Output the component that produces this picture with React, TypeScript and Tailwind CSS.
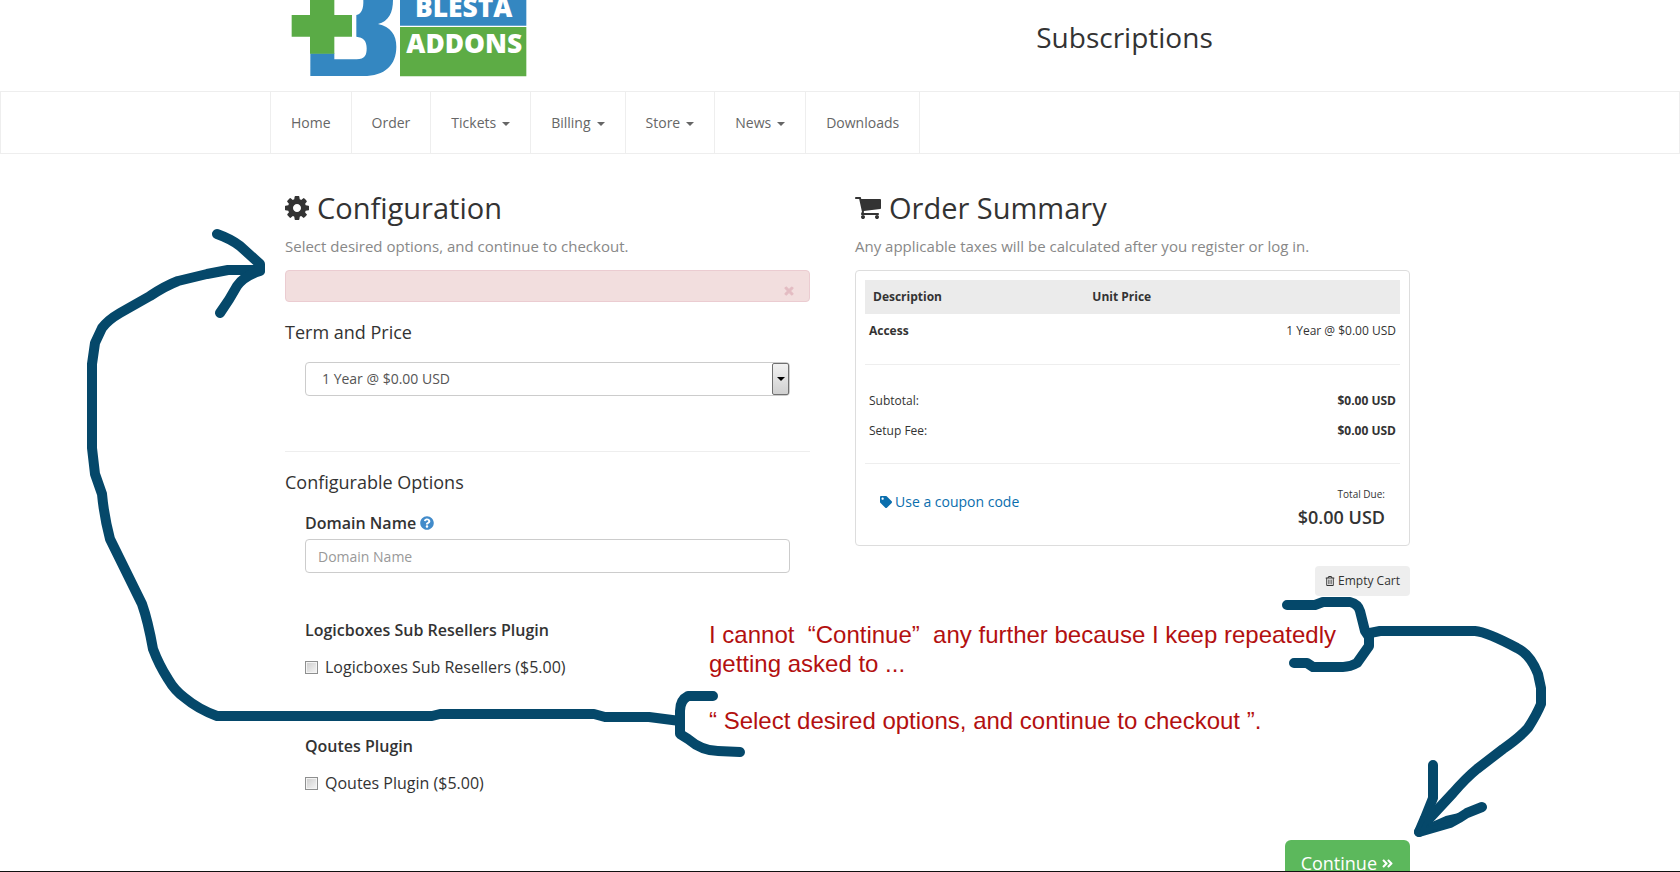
import React from 'react';
import { FaTag, FaRegTrashAlt, FaQuestionCircle, FaAngleDoubleRight, FaTimes } from 'react-icons/fa';

const navItems = [
    { label: 'Home' },
    { label: 'Order' },
    { label: 'Tickets', menu: true },
    { label: 'Billing', menu: true },
    { label: 'Store', menu: true },
    { label: 'News', menu: true },
    { label: 'Downloads' },
];

const addons = [
    { id: 'logicboxes', title: 'Logicboxes Sub Resellers Plugin', option: 'Logicboxes Sub Resellers ($5.00)' },
    { id: 'qoutes', title: 'Qoutes Plugin', option: 'Qoutes Plugin ($5.00)' },
];

function Logo() {
    return (
        <svg className="block ml-5 w-[240px] h-[78px]" viewBox="90 0 720 234" role="img" aria-label="Blesta Addons">
            <path
                fill="#3487c1"
                d="M310 0H399C399 38 386 64 354 72C392 80 409 105 409 140C409 195 375 228 310 228H151V160H223V178H290C315 178 320 165 320 145C320 122 310 112 289 110V45C305 42 311 25 310 0Z"
            />
            <path fill="#5aab46" d="M150 0H223V45H276V110H223V161H150V110H95V45H150Z" />
            <path fill="#3487c1" d="M420 0H799V77H420Z" />
            <path fill="#5dac45" d="M420 81H799V229H420Z" />
            <g fill="#fff" fontFamily="Open Sans, sans-serif" fontWeight="800">
                <text x="465" y="51" fontSize="79">BLESTA</text>
                <text x="439" y="159" fontSize="79">ADDONS</text>
            </g>
        </svg>
    );
}

function CogIcon() {
    return (
        <svg className="size-6" viewBox="128 128 1536 1536" fill="currentColor" aria-hidden="true">
            <path d="M1152 896q0-106-75-181t-181-75-181 75-75 181 75 181 181 75 181-75 75-181zm512-109v222q0 12-8 23t-20 13l-185 28q-19 54-39 91 35 50 107 138 10 12 10 25t-9 23q-27 37-99 108t-94 71q-12 0-26-9l-138-108q-44 23-91 38-16 136-29 186-7 28-36 28h-222q-14 0-24.500-8.500t-11.500-21.500l-28-184q-49-16-90-37l-141 107q-10 9-25 9-14 0-25-11-126-114-165-168-7-10-7-23 0-12 8-23 15-21 51-66.500t54-70.500q-27-50-41-99l-183-27q-13-2-21-12.500t-8-23.500v-222q0-12 8-23t19-13l186-28q14-46 39-92-40-57-107-138-10-12-10-24 0-10 9-23 26-36 98.500-107.500t94.500-71.500q13 0 26 10l138 107q44-23 91-38 16-136 29-186 7-28 36-28h222q14 0 24.500 8.500t11.500 21.500l28 184q49 16 90 37l142-107q9-9 24-9 13 0 25 10 129 119 165 170 7 8 7 22 0 12-8 23-15 21-51 66.500t-54 70.500q26 50 41 98l183 28q13 2 21 12.500t8 23.500z" />
        </svg>
    );
}

function CartIcon() {
    return (
        <svg className="size-[26px]" viewBox="64 128 1664 1664" fill="currentColor" aria-hidden="true">
            <path d="M704 1536q0 52-38 90t-90 38-90-38-38-90 38-90 90-38 90 38 38 90zm896 0q0 52-38 90t-90 38-90-38-38-90 38-90 90-38 90 38 38 90zm128-1088v512q0 24-16.500 42.500t-40.500 21.500l-1044 122q13 60 13 70 0 16-24 64h920q26 0 45 19t19 45-19 45-45 19h-1024q-26 0-45-19t-19-45q0-11 8-31.500t16-36 21.500-40 15.500-29.500l-177-823h-204q-26 0-45-19t-19-45 19-45 45-19h256q16 0 28.500 6.500t19.500 15.500 13 24.500 8 26 5.500 29.500 4.500 26h1201q26 0 45 19t19 45z" />
        </svg>
    );
}

function Annotations() {
    return (
        <div className="absolute inset-y-0 left-1/2 w-[1680px] -translate-x-1/2 pointer-events-none">
            <svg
                className="absolute inset-0 w-[1680px] h-[872px]"
                viewBox="0 -1 1680 872"
                fill="none"
                stroke="#05486a"
                strokeWidth="10"
                strokeLinecap="round"
                strokeLinejoin="round"
            >
                <path d="M260 269H228L207 273L178 280Q165 285 150 295L120 312Q108 319 102 327L95 342L92 363V447L95 473L102 493Q104 515 110 538L142 603Q148 620 153 648Q159 664 168 678Q175 690 185 697Q198 708 217 715H432L440 713H594L605 716H649L680 720" />
                <path d="M217 233Q231 238 240 245L260 263V270Q244 275 237 285Q230 298 220 312" />
                <path d="M713 695H688Q680 699 680 710V733L688 738Q702 750 718 750L740 751" />
                <path d="M1287 604H1315L1323 601H1350Q1358 603 1360 610L1365 630L1369 636V645L1357 662Q1350 666 1343 666H1313L1307 662H1294" />
                <path d="M1370 632L1380 630H1475Q1487 631 1517 647Q1530 653 1538 673L1541 687V703Q1537 713 1528 727Q1520 736 1503 748L1477 768Q1466 777 1453 792L1427 820L1419 831" />
                <path d="M1433 764V797L1425 817L1419 831L1450 822Q1460 817 1467 812L1482 806" />
                <path fill="#05486a" strokeWidth="4" d="M1434 806L1422 830L1452 822L1468 812L1446 817L1430 824Z" />
            </svg>
            <div className="absolute top-[620px] left-[709px] font-['Liberation_Sans',sans-serif] text-[24px] leading-[29px] text-[#b31010] whitespace-pre">
                <p>I cannot  “Continue”  any further because I keep repeatedly</p>
                <p>getting asked to ...</p>
                <p className="mt-7">“ Select desired options, and continue to checkout ”.</p>
            </div>
        </div>
    );
}

function OrderSummary() {
    return (
        <section className="w-1/2 px-[15px]">
            <h2 className="flex items-center gap-2 text-[29px] leading-8">
                <CartIcon />
                Order Summary
            </h2>
            <p className="mt-3 text-[15px] leading-5 text-[#888]">Any applicable taxes will be calculated after you register or log in.</p>

            <div className="mt-[14px] border border-[#ddd] rounded-sm p-[9px] text-xs">
                <table className="w-full">
                    <thead>
                        <tr className="h-[34px] bg-[#ebebeb] text-left">
                            <th className="pl-2 w-[41%]">Description</th>
                            <th className="pl-2">Unit Price</th>
                        </tr>
                    </thead>
                    <tbody>
                        <tr className="h-[34px]">
                            <td className="pl-1 font-bold">Access</td>
                            <td className="pr-1 text-right">1 Year @ $0.00 USD</td>
                        </tr>
                    </tbody>
                </table>
                <hr className="mt-4 border-[#eee]" />
                <table className="mt-[21px] w-full">
                    <tbody>
                        <tr className="h-[30px]">
                            <td className="pl-1">Subtotal:</td>
                            <td className="pr-1 text-right font-bold">$0.00 USD</td>
                        </tr>
                        <tr className="h-[30px]">
                            <td className="pl-1">Setup Fee:</td>
                            <td className="pr-1 text-right font-bold">$0.00 USD</td>
                        </tr>
                    </tbody>
                </table>
                <hr className="mt-[17px] border-[#eee]" />
                <div className="flex justify-between px-[15px] pt-[22px] pb-1">
                    <a href="#coupon" className="flex items-center gap-[3px] h-8 text-sm text-[#0a6ead]">
                        <FaTag className="size-3" />
                        Use a coupon code
                    </a>
                    <div className="text-right">
                        <p className="text-[10px] leading-4">Total Due:</p>
                        <p className="text-lg leading-[30px] font-semibold">$0.00 USD</p>
                    </div>
                </div>
            </div>

            <div className="mt-5 flex justify-end">
                <button type="button" className="flex items-center gap-[3px] h-[30px] px-[10px] rounded-sm bg-[#eee] text-xs">
                    <FaRegTrashAlt className="size-[10px]" />
                    Empty Cart
                </button>
            </div>
        </section>
    );
}

function Configuration() {
    return (
        <section className="w-1/2 px-[30px]">
            <h2 className="flex items-center gap-2 text-[29px] leading-8">
                <CogIcon />
                Configuration
            </h2>
            <p className="mt-3 text-[15px] leading-5 text-[#888]">Select desired options, and continue to checkout.</p>

            <div className="mt-[14px] flex items-end justify-end h-8 px-[14px] pb-1 rounded-sm border border-[#ebccd1] bg-[#f2dede]">
                <button type="button" aria-label="Close" className="text-[#e3bcc2]">
                    <FaTimes className="size-3 stroke-current stroke-[40]" />
                </button>
            </div>

            <h3 className="mt-[18px] text-lg leading-6">Term and Price</h3>
            <div className="px-5">
                <div className="relative mt-[18px]">
                    <select
                        aria-label="Term and Price"
                        className="appearance-none block w-full h-[34px] pl-4 rounded-sm border border-[#ccc] bg-white text-sm text-[#555]"
                    >
                        <option>1 Year @ $0.00 USD</option>
                    </select>
                    <span className="absolute inset-y-px right-px flex items-center justify-center w-[17px] border border-[#707070] rounded-xs bg-linear-to-b from-[#f2f2f2] to-[#d0d0d0] pointer-events-none">
                        <span className="border-x-4 border-t-4 border-x-transparent border-t-black" />
                    </span>
                </div>
            </div>

            <hr className="mt-[55px] border-[#eee]" />

            <h3 className="mt-[18px] text-lg leading-6">Configurable Options</h3>
            <div className="px-5">
                <label htmlFor="domain" className="mt-[17px] flex items-center gap-1 text-base leading-6 font-semibold">
                    Domain Name
                    <FaQuestionCircle className="size-[14px] text-[#428bca]" />
                </label>
                <input
                    id="domain"
                    type="text"
                    placeholder="Domain Name"
                    className="mt-1 block w-full h-[34px] px-3 rounded-sm border border-[#ccc] text-sm placeholder:text-[#999]"
                />
                <div className="mt-[45px] flex flex-col gap-[55px]">
                    {addons.map((addon) => (
                        <fieldset key={addon.id}>
                            <legend className="text-base leading-6 font-semibold">{addon.title}</legend>
                            <label className="mt-[13px] flex items-center gap-[7px] text-base leading-6">
                                <input
                                    type="checkbox"
                                    className="appearance-none size-[13px] border border-[#8e8f8f] bg-linear-to-br from-[#ccc] to-[#f6f6f6] shadow-[inset_0_0_0_1px_#f4f4f4]"
                                />
                                {addon.option}
                            </label>
                        </fieldset>
                    ))}
                </div>
            </div>
        </section>
    );
}

export default function App() {
    return (
        <div className="relative h-screen overflow-hidden bg-white font-['Open_Sans',sans-serif] text-[#333]">
            <header className="mx-auto max-w-[1170px] h-[91px] flex items-start">
                <div className="w-1/2 pl-[15px]">
                    <Logo />
                </div>
                <h1 className="w-1/2 pt-[17px] pr-4 text-center text-[28px] leading-10">Subscriptions</h1>
            </header>

            <nav className="border border-[#eee]">
                <ul className="mx-auto max-w-[1140px] flex border-l border-[#eee]">
                    {navItems.map((item) => (
                        <li key={item.label} className="border-r border-[#eee]">
                            <a href="#" className="flex items-center gap-[6px] h-[61px] px-5 text-sm text-[#666]">
                                {item.label}
                                {item.menu && <span className="mt-[3px] border-x-4 border-t-4 border-x-transparent border-t-[#666]" />}
                            </a>
                        </li>
                    ))}
                </ul>
            </nav>

            <main className="mx-auto max-w-[1170px] pt-[38px]">
                <div className="flex">
                    <Configuration />
                    <OrderSummary />
                </div>
                <div className="mt-[45px] flex justify-end pr-[15px]">
                    <button type="button" className="flex items-center gap-1 h-[46px] px-4 rounded-md bg-[#5cb85c] text-lg text-white">
                        Continue
                        <FaAngleDoubleRight className="size-[13px]" />
                    </button>
                </div>
            </main>

            <Annotations />
            <div className="absolute inset-x-0 bottom-0 h-px bg-[#111]" />
        </div>
    );
}
